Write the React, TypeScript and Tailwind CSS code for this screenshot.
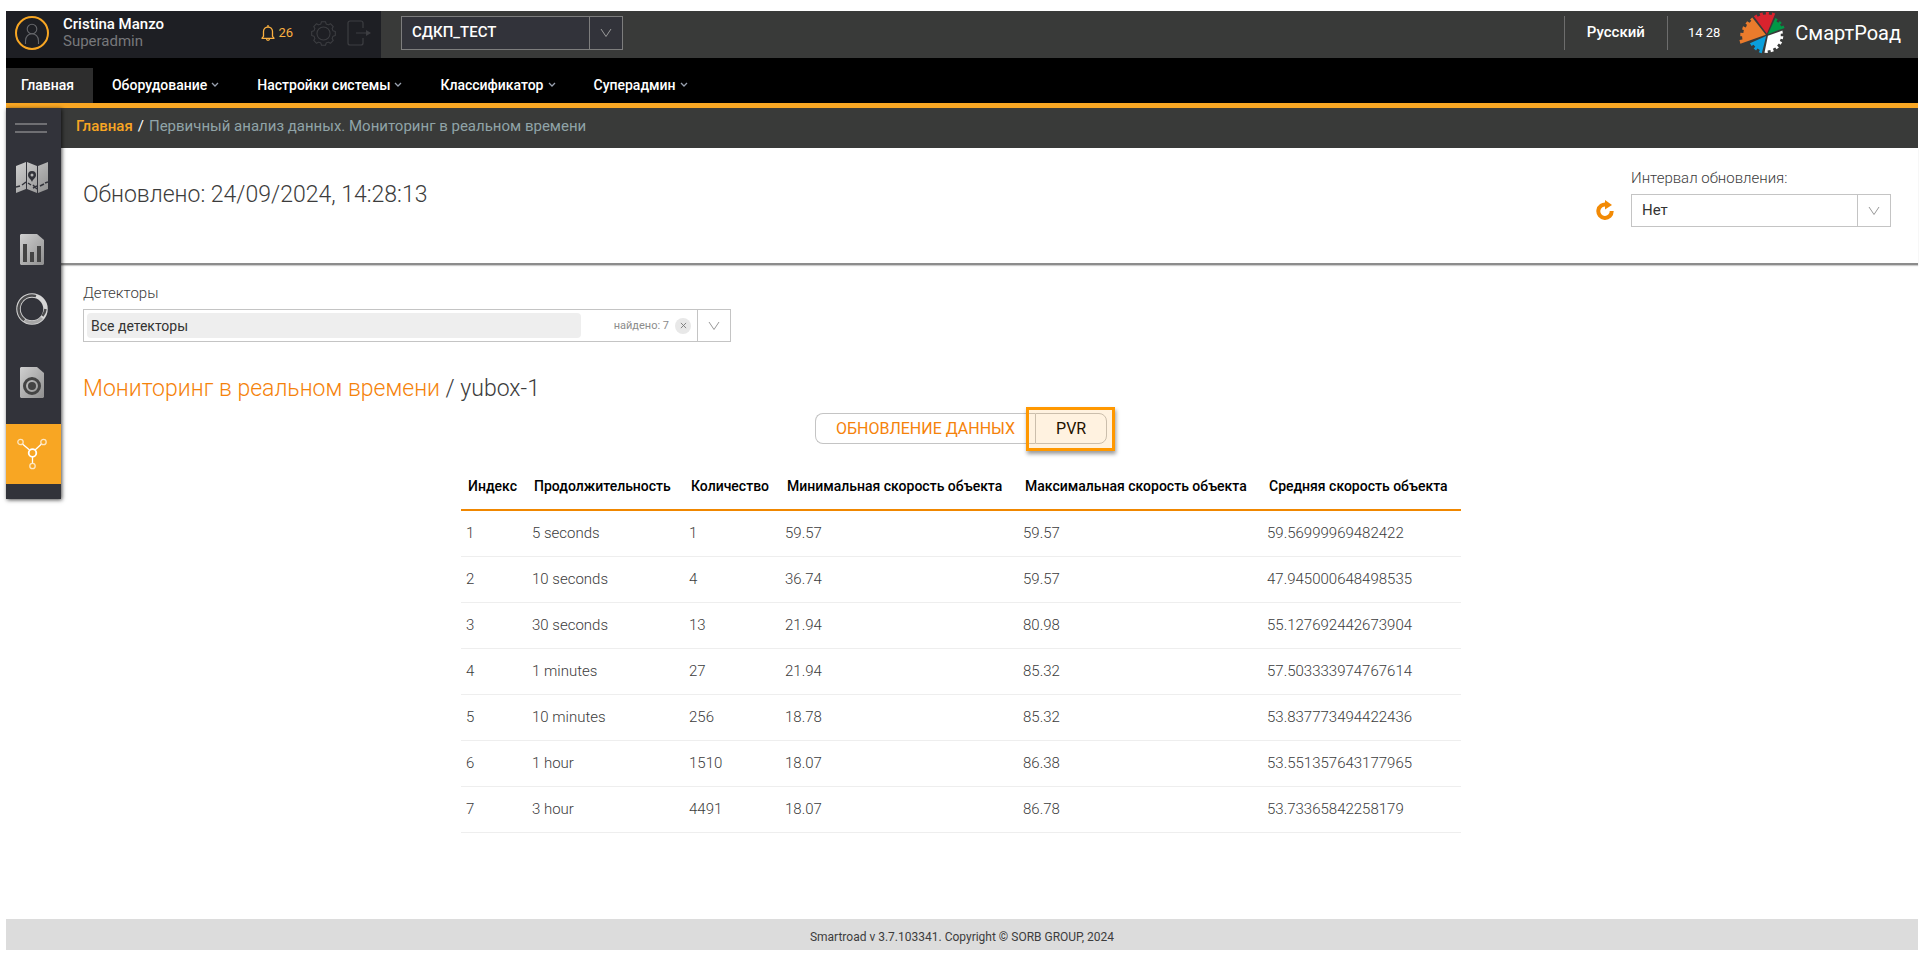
import { ReactNode } from "react";

const navItems = ["Оборудование", "Настройки системы", "Классификатор", "Суперадмин"];

const columns = [
  { title: "Индекс", width: "w-[66px]" },
  { title: "Продолжительность", width: "w-[157px]" },
  { title: "Количество", width: "w-[96px]" },
  { title: "Минимальная скорость объекта", width: "w-[238px]" },
  { title: "Максимальная скорость объекта", width: "w-[244px]" },
  { title: "Средняя скорость объекта", width: "w-[199px]" },
];

const rows = [
  ["1", "5 seconds", "1", "59.57", "59.57", "59.56999969482422"],
  ["2", "10 seconds", "4", "36.74", "59.57", "47.945000648498535"],
  ["3", "30 seconds", "13", "21.94", "80.98", "55.127692442673904"],
  ["4", "1 minutes", "27", "21.94", "85.32", "57.503333974767614"],
  ["5", "10 minutes", "256", "18.78", "85.32", "53.837773494422436"],
  ["6", "1 hour", "1510", "18.07", "86.38", "53.551357643177965"],
  ["7", "3 hour", "4491", "18.07", "86.78", "53.73365842258179"],
];

function Chevron({ className }: { className: string }) {
  return (
    <svg viewBox="0 0 12 12" className={className} fill="none" stroke="currentColor" aria-hidden="true">
      <path d="M1 2l5 7.500 5-7.500" />
    </svg>
  );
}

function SmallChevron() {
  return (
    <svg viewBox="0 0 8 6" className="h-[6px] w-2 text-gray-400" fill="none" stroke="currentColor" strokeWidth="1.3" aria-hidden="true">
      <path d="M1 1l3 3 3-3" />
    </svg>
  );
}

function UserIcon() {
  return (
    <svg viewBox="0 0 34 34" className="size-[34px]" fill="none" aria-hidden="true">
      <circle cx="17" cy="17" r="16" stroke="#f8a623" strokeWidth="2" />
      <g stroke="#66676b" strokeWidth="1.1">
        <circle cx="17" cy="13" r="4.800" />
        <path d="M10.500 28v-3c0-4.500 3-7.200 6.500-7.200s6.500 2.700 6.500 7.200v3" />
      </g>
    </svg>
  );
}

function BellIcon() {
  return (
    <svg viewBox="0 0 14 16" className="h-4 w-[14px]" fill="none" stroke="#fbb040" strokeWidth="1.3" aria-hidden="true">
      <path d="M0.500 13.300h13M0.800 13.300l1.700-2V6.500a4.500 4.500 0 0 1 9 0v4.800l1.700 2M7 2V0M5.500 13.800c0 2 3 2 3 0" />
    </svg>
  );
}

function GearIcon() {
  const teeth = 8;
  const points: string[] = [];
  for (let i = 0; i < teeth; i++) {
    const base = (i * 2 * Math.PI) / teeth;
    const profile: [number, number][] = [[-0.27, 9.5], [-0.17, 11.5], [0.17, 11.5], [0.27, 9.5]];
    for (const [offset, radius] of profile) {
      points.push(`${12 + radius * Math.sin(base + offset)},${12 - radius * Math.cos(base + offset)}`);
    }
  }
  return (
    <svg viewBox="0 0 24 24" className="size-[25px]" fill="none" stroke="#3d3e42" strokeLinejoin="round" aria-hidden="true">
      <polygon points={points.join(" ")} />
      <circle cx="12" cy="12" r="6.300" />
    </svg>
  );
}

function LogoutIcon() {
  return (
    <svg viewBox="0 0 24 26" className="h-[26px] w-6" fill="none" stroke="#3d3e42" strokeWidth="1.2" aria-hidden="true">
      <path d="M16 8V3a2 2 0 0 0-2-2H3a2 2 0 0 0-2 2v20a2 2 0 0 0 2 2h11a2 2 0 0 0 2-2v-5M9 13h14" />
      <path d="M19 10l5 3-5 3z" fill="#3d3e42" stroke="none" />
    </svg>
  );
}

/* One toothed wedge of the wheel; angles are in degrees, clockwise from the top. */
function wedge(from: number, to: number, fromRadius: number, toRadius: number, teeth: number) {
  const at = (angle: number, r: number) => {
    const a = (angle * Math.PI) / 180;
    return `${28 + r * Math.sin(a)},${23 - r * Math.cos(a)}`;
  };
  const count = teeth * 2 - 1;
  const step = (to - from) / count;
  const points = [at((from + to) / 2, 1.2)];
  for (let i = 0; i < count; i++) {
    const r = fromRadius + ((toRadius - fromRadius) * i) / (count - 1) - (i % 2 === 0 ? 0 : 2.4);
    points.push(at(from + i * step, r), at(from + (i + 1) * step, r));
  }
  return points.join(" ");
}

function Logo() {
  return (
    <svg viewBox="0 0 46 42" className="h-[42px] w-[46px]" aria-hidden="true">
      <polygon points={wedge(252, 320, 28, 23, 5)} fill="#ea7b2c" />
      <polygon points={wedge(325, 381, 23, 23, 4)} fill="#d9232e" />
      <polygon points={wedge(26, 68, 19, 19, 3)} fill="#009846" />
      <polygon points={wedge(74, 188, 16, 18, 6)} fill="#ffffff" />
      <polygon points={wedge(196, 244, 19, 19, 3)} fill="#0a9fdc" />
    </svg>
  );
}

function MetalGradient({ id }: { id: string }) {
  return (
    <linearGradient id={id} x1="0" y1="0" x2="1" y2="1">
      <stop offset="0" stopColor="#d0d0d0" />
      <stop offset="1" stopColor="#8f8f8f" />
    </linearGradient>
  );
}

function MapIcon() {
  return (
    <svg viewBox="0 0 32 31" className="h-[31px] w-8" aria-hidden="true">
      <defs><MetalGradient id="map-fill" /></defs>
      <path d="M0 4l10-4v27L0 31zM11 0l10 4v27l-10-4zM22 4l10-4v27l-10 4z" fill="url(#map-fill)" />
      <path d="M16 20c-1-3-4-4-4-7a4 4 0 0 1 8 0c0 3-3 4-4 7z" fill="#32333a" />
      <circle cx="16" cy="13" r="1.500" fill="#b5b5b5" />
      <path d="M0 25l4-1M6 23l4-3M12 21l3 2M17 26l4-2M17 23l4 4M24 24l4-2M29 21l3-1" fill="none" stroke="#32333a" strokeWidth="1.500" />
    </svg>
  );
}

function ReportIcon() {
  return (
    <svg viewBox="0 0 24 31" className="h-[31px] w-6" aria-hidden="true">
      <defs><MetalGradient id="report-fill" /></defs>
      <path d="M1 0h16l7 6v24l-1 1H1l-1-1V1z" fill="url(#report-fill)" />
      <path d="M3 10h4v18H3zM10 18h4v10h-4zM17 12h4v16h-4z" fill="#444" />
    </svg>
  );
}

function RingIcon() {
  return (
    <svg viewBox="0 0 32 32" className="size-8" fill="none" aria-hidden="true">
      <circle cx="16" cy="16" r="13.500" stroke="#d6d6d6" strokeWidth="4.500" />
      <path d="M8.500 27.200A13.500 13.500 0 0 1 20 3.100" stroke="#4b4b4d" strokeWidth="2.500" />
      <path d="M29.500 16a13.500 13.500 0 0 1-3 7" stroke="#4b4b4d" strokeWidth="2.500" />
      <path d="M26 25a13.500 13.500 0 0 1-17 2.500" stroke="#a6a6a6" strokeWidth="3" />
    </svg>
  );
}

function DeviceIcon() {
  return (
    <svg viewBox="0 0 24 31" className="h-[31px] w-6" fill="none" aria-hidden="true">
      <defs><MetalGradient id="device-fill" /></defs>
      <path d="M1 0h16l7 6v24l-1 1H1l-1-1V1z" fill="url(#device-fill)" />
      <circle cx="12" cy="19" r="7.500" stroke="#444" strokeWidth="3" />
      <circle cx="12" cy="19" r="4" fill="#444" />
    </svg>
  );
}

function NodesIcon() {
  return (
    <svg viewBox="0 0 30 32" className="h-8 w-[30px]" fill="none" stroke="#fff" aria-hidden="true">
      <path d="M5.500 6l7 6M24.500 6l-6.500 6M15.500 19v6" strokeWidth="1.300" />
      <circle cx="15.500" cy="15" r="3.800" strokeWidth="1.800" />
      <g strokeWidth="1.300" stroke="#fde7c2">
        <circle cx="3.500" cy="4" r="2.700" />
        <circle cx="26.500" cy="4" r="2.700" />
        <circle cx="15.500" cy="28" r="2.700" />
      </g>
    </svg>
  );
}

function RefreshIcon() {
  return (
    <svg viewBox="0 0 18 20" className="h-5 w-[18px]" fill="none" aria-hidden="true">
      <path d="M10.500 4.700A6.700 6.700 0 1 0 15.700 11" stroke="#f28a05" strokeWidth="4" />
      <path d="M9 0l7 5-7 4.500z" fill="#f28a05" />
    </svg>
  );
}

function SideLink({ label, className, children }: { label: string; className: string; children: ReactNode }) {
  return (
    <a href="#" aria-label={label} className={`flex w-full items-center justify-center pr-[3px] ${className}`}>
      {children}
    </a>
  );
}

export default function App() {
  return (
    <div className="flex min-h-screen flex-col bg-white px-[6px] py-[11px] font-['Roboto',sans-serif] text-sm text-[#3c3c3c]">
      <header className="flex h-[47px] items-stretch bg-[#393a39] text-white">
        <div className="flex w-[375px] items-center bg-[#1e1f24] pr-[10px] pb-[3px] pl-[9px]">
          <UserIcon />
          <div className="ml-[14px] flex-1">
            <div className="text-[15px] leading-[17px] font-medium">Cristina Manzo</div>
            <div className="text-[15px] leading-[17px] text-[#77787b]">Superadmin</div>
          </div>
          <button type="button" className="flex items-center gap-[3px] text-[13px] text-[#fbb040]">
            <BellIcon />
            26
          </button>
          <button type="button" aria-label="Настройки" className="ml-[18px]"><GearIcon /></button>
          <button type="button" aria-label="Выход" className="ml-[11px]"><LogoutIcon /></button>
        </div>
        <div className="relative mt-[5px] ml-5 flex h-[34px] w-[222px]">
          <select aria-label="Проект" className="w-full appearance-none border border-[#7d7d7d] bg-[#32333a] px-[10px] text-[15px] font-medium text-white">
            <option>СДКП_ТЕСТ</option>
          </select>
          <span className="pointer-events-none absolute inset-y-0 right-0 flex w-[34px] items-center justify-center border-l border-[#7d7d7d] pr-[2px] text-[#9a9a9a]">
            <Chevron className="size-3" />
          </span>
        </div>
        <div className="ml-auto flex items-center pb-[3px]">
          <button type="button" className="h-[34px] border-x border-[#6d6d6d] px-[22px] text-[15px] font-medium">Русский</button>
          <time className="ml-5 text-[13px]">14 28</time>
          <a href="#" className="mr-[17px] ml-[19px] flex items-center gap-[10px] text-xl">
            <Logo />
            СмартРоад
          </a>
        </div>
      </header>

      <nav className="flex h-[50px] items-end border-b-[5px] border-[#f8a623] bg-black font-medium text-white">
        <a href="#" className="flex h-[35px] items-center bg-[#2d2d2d] pr-[19px] pb-px pl-[15px]">Главная</a>
        {navItems.map((item) => (
          <a key={item} href="#" className="flex h-[35px] items-center gap-1 px-[19px] pb-px">
            {item}
            <SmallChevron />
          </a>
        ))}
      </nav>

      <div className="flex flex-1">
        <aside className="z-10 flex w-[55px] shrink-0 flex-col self-start bg-[#32333a] pb-[15px] shadow-[1px_1px_4px_rgba(0,0,0,0.7)]">
          <button type="button" aria-label="Меню" className="mt-[15px] ml-[9px] h-[10px] w-8 border-y-2 border-[#6f6f73]" />
          <SideLink label="Карта" className="mt-[28px] h-[32px]"><MapIcon /></SideLink>
          <SideLink label="Отчёты" className="mt-[40px] h-[32px]"><ReportIcon /></SideLink>
          <SideLink label="Статистика" className="mt-[28px] h-[32px]"><RingIcon /></SideLink>
          <SideLink label="Устройства" className="mt-[41px] h-[32px]"><DeviceIcon /></SideLink>
          <SideLink label="Мониторинг" className="mt-[26px] h-[60px] bg-[#f8a623]"><NodesIcon /></SideLink>
        </aside>

        <main className="min-w-0 flex-1">
          <div className="flex h-10 items-center gap-[5px] bg-[#393a39] pb-[2px] pl-[15px] text-[15px]">
            <a href="#" className="font-medium text-[#f8a623]">Главная</a>
            <span className="text-white">/</span>
            <span className="text-[#90a4a8]">Первичный анализ данных. Мониторинг в реальном времени</span>
          </div>

          <section className="flex h-[117px] justify-between border-b-2 border-[#8c8c8c] pr-[27px] pl-[22px] shadow-[0_1px_1px_rgba(0,0,0,0.2)]">
            <h1 className="pt-[31px] text-[23px] leading-8 font-light">Обновлено: 24/09/2024, 14:28:13</h1>
            <div className="flex items-end gap-[17px] self-start pt-[20px]">
              <button type="button" aria-label="Обновить" className="mb-[7px]"><RefreshIcon /></button>
              <div className="flex w-[260px] flex-col">
                <label htmlFor="interval" className="mb-[6px] text-[15px] leading-5 font-light">Интервал обновления:</label>
                <div className="relative flex h-[33px]">
                  <select id="interval" className="w-full appearance-none border border-[#c4c4c4] bg-white px-[10px] text-[15px] text-[#333]">
                    <option>Нет</option>
                  </select>
                  <span className="pointer-events-none absolute inset-y-0 right-0 flex w-[34px] items-center justify-center border-l border-[#c4c4c4] pr-[2px] text-[#999]">
                    <Chevron className="size-3" />
                  </span>
                </div>
              </div>
            </div>
          </section>

          <section className="pt-[18px] pl-[22px]">
            <label htmlFor="detectors" className="mb-[6px] block text-[15px] leading-5 font-light">Детекторы</label>
            <div className="flex h-[33px] w-[648px] items-center border border-[#c4c4c4]">
              <input id="detectors" readOnly value="Все детекторы" className="ml-[3px] h-[25px] w-[494px] rounded-[4px] bg-[#eee] px-[4px] text-sm text-[#333]" />
              <span className="ml-auto text-[11px] text-[#8c8c8c]">найдено: 7</span>
              <button type="button" aria-label="Очистить" className="mx-[6px] flex size-4 items-center justify-center rounded-full bg-[#e8e8e8]">
                <svg viewBox="0 0 8 8" className="size-[7px]" stroke="#777" aria-hidden="true"><path d="M1 1l6 6M7 1L1 7" /></svg>
              </button>
              <button type="button" aria-label="Открыть список" className="flex h-full w-[33px] items-center justify-center border-l border-[#c4c4c4] text-[#999]">
                <Chevron className="size-3" />
              </button>
            </div>
            <h2 className="mt-[31px] text-[23px] leading-8 font-light">
              <a href="#" className="text-[#f5820a]">Мониторинг в реальном времени</a> / yubox-1
            </h2>
          </section>

          <section className="flex flex-col items-center pr-[57px]">
            <div className="mt-[8px] flex h-[31px] text-base">
              <button type="button" className="rounded-l-[8px] border border-r-0 border-[#c4c4c4] px-5 text-[#f5820a]">ОБНОВЛЕНИЕ ДАННЫХ</button>
              <button type="button" className="relative w-[72px] rounded-r-[8px] border border-[#c4c4c4] text-black">
                PVR
                <span className="pointer-events-none absolute -top-[7px] -right-[9px] -bottom-[8px] -left-[10px] border-[3px] border-[#ff9800] bg-[#ff9800]/12 shadow-[1px_3px_4px_rgba(0,0,0,0.4)]" />
              </button>
            </div>
            <table className="mt-[22px] w-[1000px] max-w-full table-fixed text-left">
              <thead>
                <tr className="h-[44px] border-b-2 border-[#f08700] text-black">
                  {columns.map((c) => (
                    <th key={c.title} className={`${c.width} pb-[4px] pl-[7px] font-medium whitespace-nowrap`}>{c.title}</th>
                  ))}
                </tr>
              </thead>
              <tbody>
                {rows.map((row) => (
                  <tr key={row[0]} className="h-[46px] border-b border-[#eee] font-light">
                    {row.map((cell, i) => (
                      <td key={i} className="pt-px pl-[5px] text-[15px]">{cell}</td>
                    ))}
                  </tr>
                ))}
              </tbody>
            </table>
          </section>
        </main>
      </div>

      <footer className="flex h-[31px] items-center justify-center bg-[#dcdcdc] pt-[4px] text-xs">
        Smartroad v 3.7.103341. Copyright © SORB GROUP, 2024
      </footer>
    </div>
  );
}
